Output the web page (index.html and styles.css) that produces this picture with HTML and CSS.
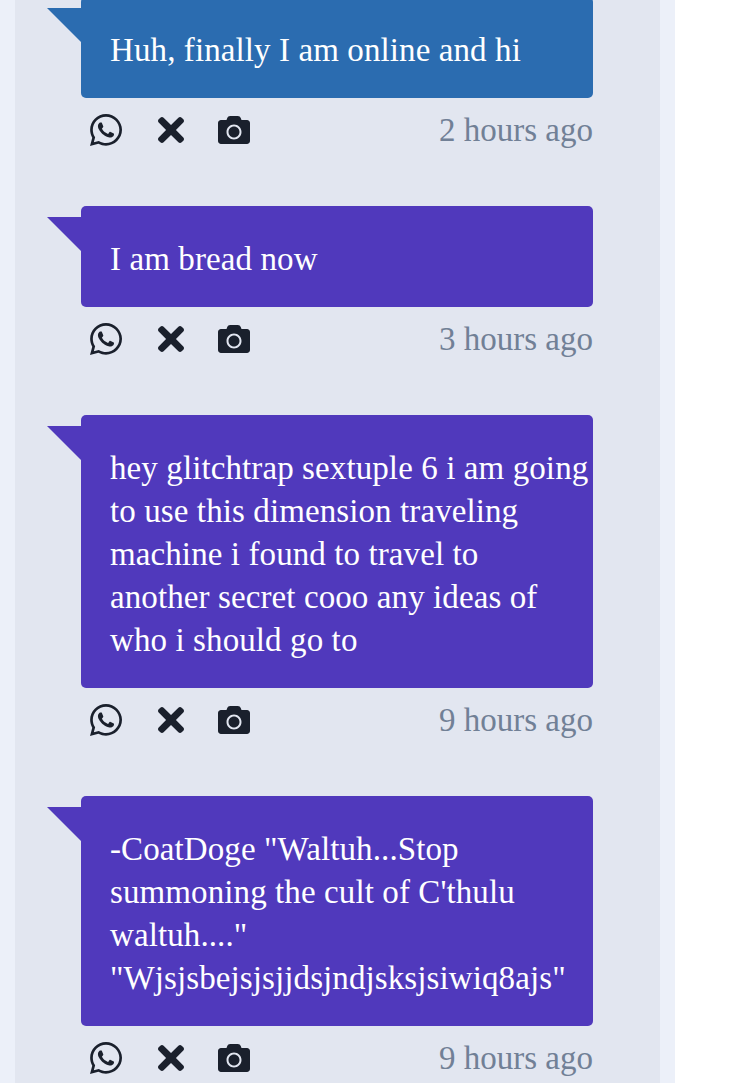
FILE: index.html
```html
<!DOCTYPE html>
<html lang="en">
<head>
<meta charset="utf-8">
<title>Messages</title>
<link rel="stylesheet" href="styles.css">
</head>
<body>
<svg class="defs" width="0" height="0" aria-hidden="true">
  <symbol id="i-wa" viewBox="0 32 448 448"><path d="M380.9 97.1C339 55.1 283.2 32 223.9 32c-122.4 0-222 99.6-222 222 0 39.1 10.2 77.3 29.6 111L0 480l117.7-30.9c32.4 17.7 68.9 27 106.1 27h.1c122.3 0 224.1-99.6 224.1-222 0-59.3-25.2-115-67.1-157zm-157 341.6c-33.2 0-65.7-8.9-94-25.7l-6.7-4-69.8 18.3L72 359.2l-4.4-7c-18.5-29.4-28.2-63.3-28.2-98.2 0-101.7 82.8-184.5 184.6-184.5 49.3 0 95.6 19.2 130.4 54.1 34.8 34.9 56.2 81.2 56.1 130.5 0 101.8-84.9 184.6-186.6 184.6zm101.2-138.2c-5.5-2.8-32.8-16.2-37.9-18-5.1-1.9-8.8-2.8-12.5 2.8-3.7 5.6-14.3 18-17.6 21.8-3.2 3.7-6.5 4.2-12 1.4-32.6-16.3-54-29.1-75.5-66-5.7-9.8 5.7-9.1 16.3-30.3 1.8-3.7.9-6.9-.5-9.7-1.4-2.8-12.5-30.1-17.1-41.2-4.5-10.8-9.1-9.3-12.5-9.5-3.2-.2-6.9-.2-10.6-.2-3.7 0-9.7 1.4-14.8 6.9-5.1 5.6-19.4 19-19.4 46.3 0 27.3 19.9 53.7 22.6 57.4 2.8 3.7 39.1 59.7 94.8 83.8 35.2 15.2 49 16.5 66.6 13.9 10.7-1.6 32.8-13.4 37.4-26.4 4.6-13 4.6-24.1 3.2-26.4-1.3-2.5-5-3.9-10.5-6.6z"/></symbol>
  <symbol id="i-x" viewBox="0 80 352 352"><path d="M242.72 256l100.07-100.07c12.28-12.28 12.28-32.19 0-44.48l-22.24-22.24c-12.28-12.28-32.19-12.28-44.48 0L176 189.28 75.93 89.21c-12.28-12.28-32.19-12.28-44.48 0L9.21 111.45c-12.28 12.28-12.28 32.19 0 44.48L109.28 256 9.21 356.07c-12.28 12.28-12.28 32.19 0 44.48l22.24 22.24c12.28 12.28 32.2 12.28 44.48 0L176 322.72l100.07 100.07c12.28 12.28 32.2 12.28 44.48 0l22.24-22.24c12.28-12.28 12.28-32.19 0-44.48L242.72 256z"/></symbol>
  <symbol id="i-cam" viewBox="0 32 512 448"><path d="M512 144v288c0 26.5-21.5 48-48 48H48c-26.5 0-48-21.5-48-48V144c0-26.5 21.5-48 48-48h88l12.3-32.9c7-18.7 24.9-31.1 44.9-31.1h125.5c20 0 37.9 12.4 44.9 31.1L376 96h88c26.5 0 48 21.5 48 48zM376 288c0-66.2-53.8-120-120-120s-120 53.8-120 120 53.8 120 120 120 120-53.8 120-120zm-32 0c0 48.5-39.5 88-88 88s-88-39.5-88-88 39.5-88 88-88 88 39.5 88 88z"/></symbol>
</svg>
<div class="column">
  <main class="panel">
    <article class="post">
      <div class="bubble blue"><p>Huh, finally I am online and hi</p></div>
      <div class="meta">
        <div class="actions">
          <svg class="ic ic-wa"><use href="#i-wa"/></svg>
          <svg class="ic ic-x"><use href="#i-x"/></svg>
          <svg class="ic ic-cam"><use href="#i-cam"/></svg>
        </div>
        <time>2 hours ago</time>
      </div>
    </article>
    <article class="post">
      <div class="bubble purple"><p>I am bread now</p></div>
      <div class="meta">
        <div class="actions">
          <svg class="ic ic-wa"><use href="#i-wa"/></svg>
          <svg class="ic ic-x"><use href="#i-x"/></svg>
          <svg class="ic ic-cam"><use href="#i-cam"/></svg>
        </div>
        <time>3 hours ago</time>
      </div>
    </article>
    <article class="post">
      <div class="bubble purple"><p>hey glitchtrap sextuple 6 i am going<br>to use this dimension traveling<br>machine i found to travel to<br>another secret cooo any ideas of<br>who i should go to</p></div>
      <div class="meta">
        <div class="actions">
          <svg class="ic ic-wa"><use href="#i-wa"/></svg>
          <svg class="ic ic-x"><use href="#i-x"/></svg>
          <svg class="ic ic-cam"><use href="#i-cam"/></svg>
        </div>
        <time>9 hours ago</time>
      </div>
    </article>
    <article class="post">
      <div class="bubble purple"><p>-CoatDoge "Waltuh...Stop<br>summoning the cult of C'thulu<br>waltuh...."<br>"Wjsjsbejsjsjjdsjndjsksjsiwiq8ajs"</p></div>
      <div class="meta">
        <div class="actions">
          <svg class="ic ic-wa"><use href="#i-wa"/></svg>
          <svg class="ic ic-x"><use href="#i-x"/></svg>
          <svg class="ic ic-cam"><use href="#i-cam"/></svg>
        </div>
        <time>9 hours ago</time>
      </div>
    </article>
  </main>
</div>
</body>
</html>
```
FILE: styles.css
```css
html, body {
  margin: 0;
  height: 100%;
  overflow: hidden;
  background: #fff;
}
.defs { display: block; height: 0; }
.column {
  width: 675px;
  height: 1083px;
  box-sizing: border-box;
  padding: 0 15px;
  background: #ecf0f9;
  overflow: hidden;
}
.panel {
  height: 1100px;
  margin-top: -3px;
  padding-left: 66px;
  padding-right: 67px;
  background: #e2e6f0;
  font-family: "Liberation Serif", serif;
}
.post { margin-bottom: 44px; }
.bubble {
  position: relative;
  border-radius: 5px;
  padding: 32px 0 26px 29px;
  color: #fff;
  font-size: 33px;
  letter-spacing: 0.1px;
  line-height: 43px;
  white-space: nowrap;
}
.bubble p { margin: 0; }
.bubble::before {
  content: "";
  position: absolute;
  left: -34px;
  top: 11px;
  width: 34px;
  height: 34px;
  clip-path: polygon(0 0, 100% 0, 100% 100%);
  background: inherit;
}
.blue { background: #2b6cb0; }
.purple { background: #5039bc; }
.meta {
  height: 64px;
  display: flex;
  align-items: center;
  justify-content: space-between;
}
.actions {
  display: flex;
  align-items: center;
  padding-left: 9px;
  gap: 36px;
}
.ic { display: block; fill: #1a202c; }
.ic-wa { width: 32px; height: 32px; }
.ic-x { width: 26px; height: 26px; }
.ic-cam { width: 32px; height: 28px; margin-left: -2px; }
time {
  color: #718096;
  font-size: 33px;
}
```
